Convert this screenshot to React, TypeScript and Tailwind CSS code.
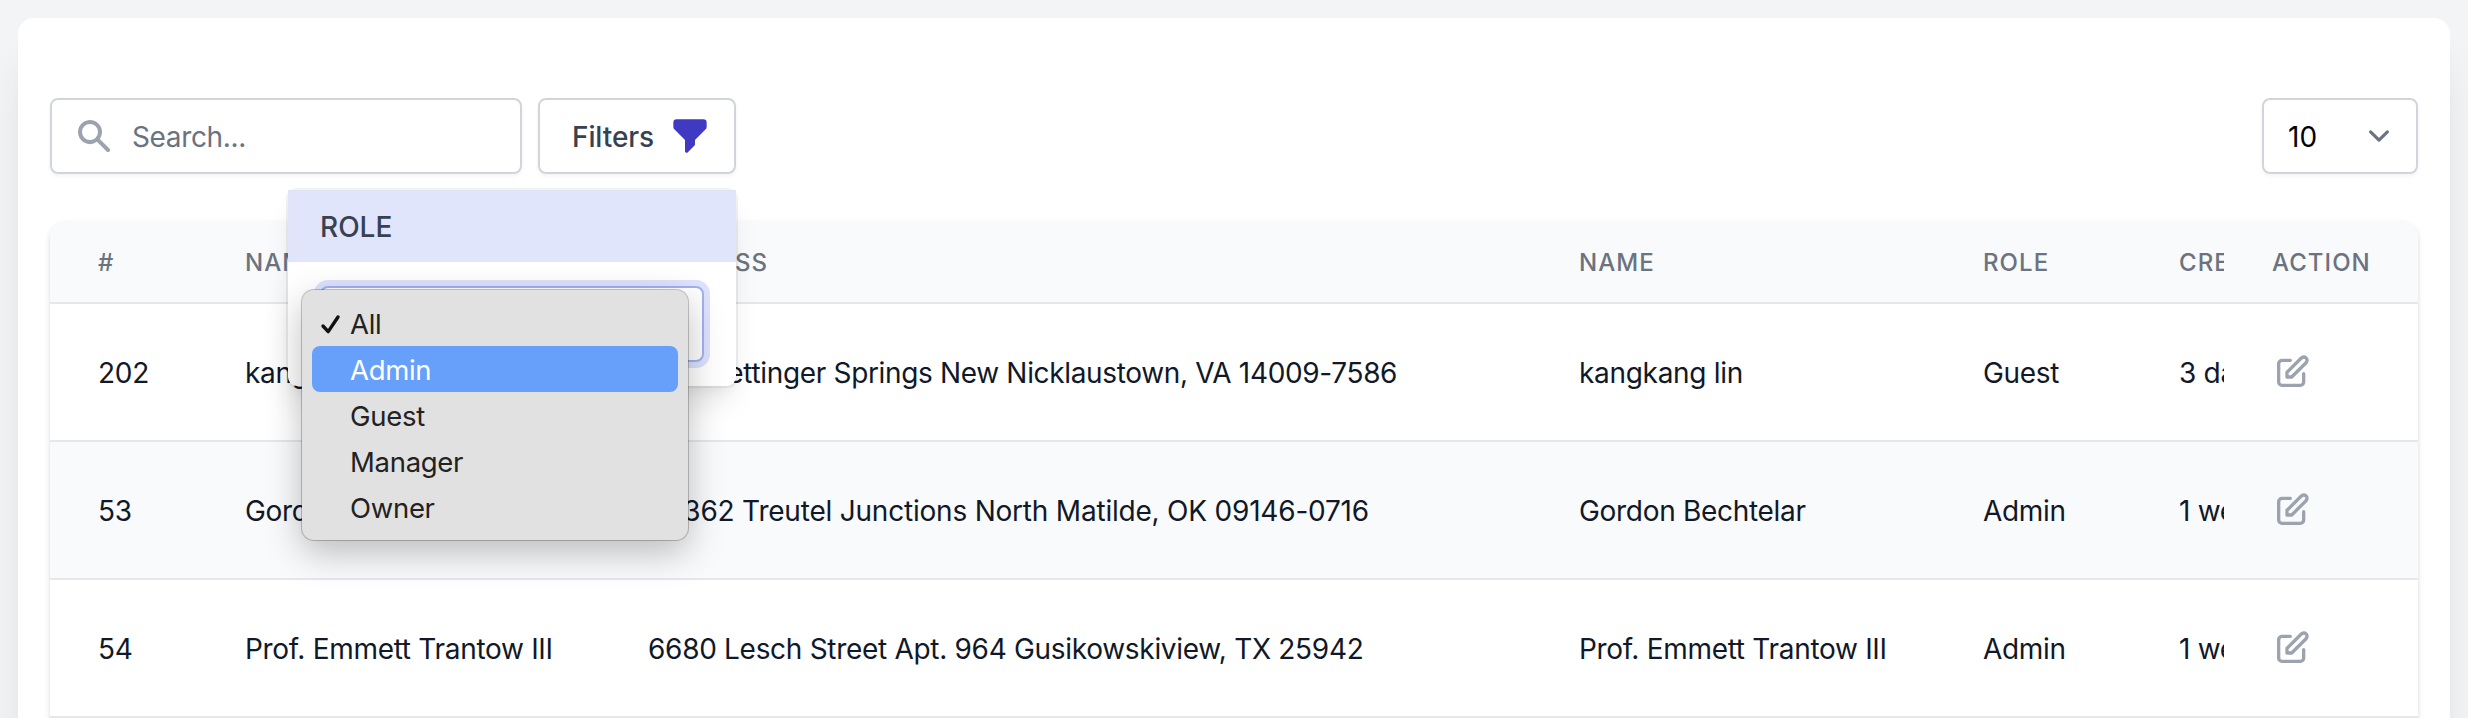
import React from "react";

type Row = { id: string; name: string; address: string; role: string; created: string; tracking: string };

const rows: Row[] = [
  { id: "202", name: "kangkang lin", address: "906 Hettinger Springs New Nicklaustown, VA 14009-7586", role: "Guest", created: "3 days ago", tracking: "tracking-[-0.34px]" },
  { id: "53", name: "Gordon Bechtelar", address: "40362 Treutel Junctions North Matilde, OK 09146-0716", role: "Admin", created: "1 week ago", tracking: "tracking-[-0.21px]" },
  { id: "54", name: "Prof. Emmett Trantow III", address: "6680 Lesch Street Apt. 964 Gusikowskiview, TX 25942", role: "Admin", created: "1 week ago", tracking: "tracking-[-0.3px]" },
];

const options = ["All", "Admin", "Guest", "Manager", "Owner"];

const columns = "grid grid-cols-[147px_403px_931px_404px_195px_94px_194px] items-center";

function SearchIcon() {
  return (
    <svg className="size-10 shrink-0 text-[#9ca3af]" viewBox="0 0 20 20" fill="currentColor">
      <path fillRule="evenodd" clipRule="evenodd" d="M8 4a4 4 0 100 8 4 4 0 000-8zM2 8a6 6 0 1110.89 3.476l4.817 4.817a1 1 0 01-1.414 1.414l-4.816-4.816A6 6 0 012 8z" />
    </svg>
  );
}

function FilterIcon() {
  return (
    <svg className="size-10 shrink-0 text-[#403ac3]" viewBox="0 0 24 24" fill="currentColor" stroke="currentColor" strokeWidth="2" strokeLinecap="round" strokeLinejoin="round">
      <path d="M3 4a1 1 0 011-1h16a1 1 0 011 1v2.586a1 1 0 01-.293.707l-6.414 6.414a1 1 0 00-.293.707V17l-4 4v-6.586a1 1 0 00-.293-.707L3.293 7.293A1 1 0 013 6.586V4z" />
    </svg>
  );
}

function EditIcon() {
  return (
    <svg className="size-10 text-[#9ca3af]" viewBox="0 0 24 24" fill="none" stroke="currentColor" strokeWidth="2" strokeLinecap="round" strokeLinejoin="round">
      <path d="M11 5H6a2 2 0 00-2 2v11a2 2 0 002 2h11a2 2 0 002-2v-5m-1.414-9.414a2 2 0 112.828 2.828L11.828 15H9v-2.828l8.586-8.586z" />
    </svg>
  );
}

function Chevron() {
  return (
    <svg className="size-[42px]" viewBox="0 0 20 20" fill="none" stroke="#6b7280" strokeWidth="1.5" strokeLinecap="round" strokeLinejoin="round">
      <path d="M6 8l4 4 4-4" />
    </svg>
  );
}

function RoleMenu() {
  return (
    <ul className="absolute top-[100px] left-[14px] w-[386px] rounded-[12px] bg-[#e1e1e1] p-[10px] text-[27.5px] tracking-[-0.3px] text-[#222] shadow-[0_0_0_1px_rgba(0,0,0,0.22),0_12px_36px_rgba(0,0,0,0.26)]">
      {options.map((o) => (
        <li
          key={o}
          className={
            o === "Admin"
              ? "flex h-[46px] items-center rounded-[8px] bg-[#67a0fa] pt-px pl-[38px] text-white"
              : "flex h-[46px] items-center pt-px pl-[38px]"
          }
        >
          {o === "All" && (
            <svg className="-ml-[30px] mr-[8px] h-[22px] w-[22px]" viewBox="0 0 22 22" fill="none" stroke="#111" strokeWidth="3.4" strokeLinecap="round" strokeLinejoin="round">
              <path d="M3 13l5.2 5.6L18 4" />
            </svg>
          )}
          {o}
        </li>
      ))}
    </ul>
  );
}

function FilterDropdown() {
  return (
    <div className="absolute top-[92px] right-0 z-10 h-[196px] w-[448px] rounded-[9px] bg-white shadow-[0_0_0_2px_rgba(0,0,0,0.05),0_20px_30px_-6px_rgba(0,0,0,0.1),0_8px_12px_-4px_rgba(0,0,0,0.05)]">
      <div className="flex h-[72px] items-center bg-[#e0e5fc] px-8 pt-[2px] text-[28px] font-medium text-[#374151]">ROLE</div>
      <div className="px-8 pt-6">
        <div className="h-[76px] rounded-[8px] border-2 border-[#a4b0f4] bg-white shadow-[0_0_0_6px_rgba(180,190,250,0.45)]" />
      </div>
      <RoleMenu />
    </div>
  );
}

export default function App() {
  return (
    <div className="h-[718px] overflow-hidden bg-[#f3f4f6] px-[18px] pt-[18px] font-['Inter',sans-serif] text-[28px] leading-[40px]">
      <main className="h-[900px] rounded-[16px] bg-white px-8 pt-20 shadow-[0_40px_50px_-10px_rgba(0,0,0,0.1),0_20px_20px_-10px_rgba(0,0,0,0.04)]">
        <div className="flex justify-between">
          <div className="flex gap-4">
            <label className="flex h-[76px] w-[472px] items-center gap-[18px] rounded-[8px] border-2 border-[#d1d5db] pl-[22px] text-[#6b7280] shadow-[0_2px_4px_rgba(0,0,0,0.05)]">
              <SearchIcon />
              <span className="pt-px tracking-[-0.35px]">Search...</span>
            </label>
            <div className="relative">
              <button className="flex h-[76px] w-[198px] items-center justify-between rounded-[8px] border-2 border-[#d1d5db] pr-6 pl-8 font-medium tracking-[-0.1px] text-[#374151] shadow-[0_2px_4px_rgba(0,0,0,0.05)]">
                <span className="pt-px">Filters</span>
                <FilterIcon />
              </button>
              <FilterDropdown />
            </div>
          </div>
          <div className="flex h-[76px] w-[156px] items-center justify-between rounded-[8px] border-2 border-[#d1d5db] pr-4 pl-6 text-black shadow-[0_2px_4px_rgba(0,0,0,0.05)]">
            <span className="pt-px">10</span>
            <Chevron />
          </div>
        </div>
        <div className="mt-12 overflow-hidden rounded-t-[16px] shadow-[0_2px_6px_rgba(0,0,0,0.1),0_2px_4px_rgba(0,0,0,0.06)]">
          <div className={`${columns} h-20 bg-[#f9fafb] pt-px text-[24px] font-medium tracking-[1.05px] text-[#6b7280]`}>
            <span className="pl-12">#</span>
            <span className="pl-12">NAME</span>
            <span className="pl-12">ADDRESS</span>
            <span className="pl-12">NAME</span>
            <span className="pl-12">ROLE</span>
            <span className="overflow-hidden pl-[49px] whitespace-nowrap">CREATED</span>
            <span className="pl-12">ACTION</span>
          </div>
          {rows.map((r, i) => (
            <div key={r.id} className={`${columns} h-[138px] border-t-2 border-[#e5e7eb] tracking-[-0.3px] text-[#111827] ${i % 2 ? "bg-[#f9fafb]" : "bg-white"}`}>
              <span className="pt-px pl-12">{r.id}</span>
              <span className="pt-px pl-12 whitespace-nowrap">{r.name}</span>
              <span className={`pt-px pl-12 whitespace-nowrap ${r.tracking}`}>{r.address}</span>
              <span className="pt-px pl-12 whitespace-nowrap">{r.name}</span>
              <span className="pt-px pl-12">{r.role}</span>
              <span className="overflow-hidden pt-px pl-[49px] whitespace-nowrap">{r.created}</span>
              <span className="pl-12"><EditIcon /></span>
            </div>
          ))}
          <div className="h-2 border-t-2 border-[#e5e7eb]" />
        </div>
      </main>
    </div>
  );
}
